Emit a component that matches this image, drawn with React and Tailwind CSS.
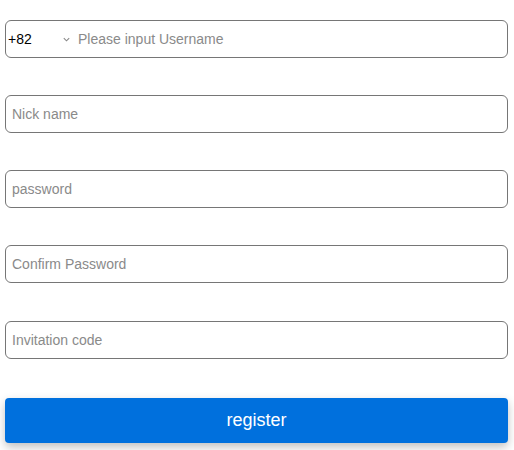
import React from 'react';

const fields = ['Nick name', 'password', 'Confirm Password', 'Invitation code'];

const App = () => {
  return (
    <div className="w-[514px] h-[450px] bg-white pl-[5px] pr-[6px] pt-[20px] overflow-hidden" style={{ fontFamily: '"Liberation Sans", Arial, sans-serif' }}>
      {/* Username with country code */}
      <div className="flex items-center h-[38px] border border-[#767676] rounded-[6px] mb-[37px]">
        <span className="pl-[2px] w-[56px] text-[14px] text-black">+82</span>
        <svg className="w-[9px] h-[9px] mr-[7px]" viewBox="0 0 10 10" fill="none" stroke="#888" strokeWidth="1.2">
          <path d="M2 3.5 L5 6.5 L8 3.5" />
        </svg>
        <input
          type="text"
          placeholder="Please input Username"
          className="flex-1 h-full bg-transparent outline-none text-[14px] placeholder:text-[#8a8a8a]"
        />
      </div>

      {fields.map((f, i) => (
        <div key={f} className={`h-[38px] border border-[#767676] rounded-[6px] flex items-center ${i === 3 ? 'mt-[38px]' : ''} ${i < 3 ? 'mb-[37px]' : ''}`}>
          <input
            type={f.toLowerCase().includes('password') ? 'password' : 'text'}
            placeholder={f}
            className="w-full h-full px-[6px] bg-transparent outline-none text-[14px] placeholder:text-[#8a8a8a]"
          />
        </div>
      ))}

      <button className="w-full h-[45px] mt-[39px] bg-[#0070dd] text-white text-[18px] rounded-[4px] shadow-[0_4px_10px_rgba(0,0,0,0.25)]">
        register
      </button>
    </div>
  );
};

export default App;
